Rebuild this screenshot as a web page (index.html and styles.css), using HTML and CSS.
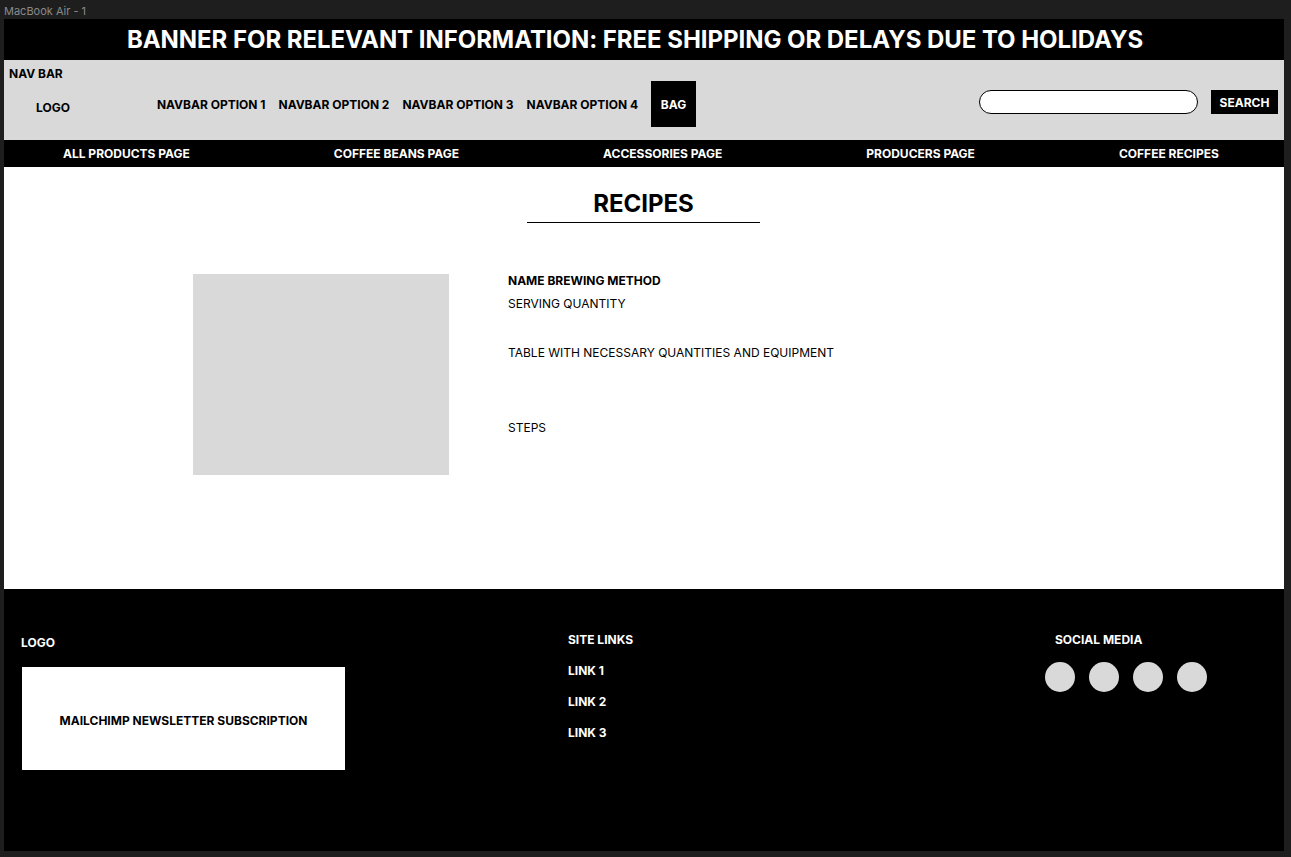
FILE: index.html
```html
<!DOCTYPE html>
<html>
<head>
<meta charset="utf-8">
<link rel="stylesheet" href="styles.css">
</head>
<body>
<div class="canvas">
  <div class="frame-label">MacBook Air - 1</div>
  <div class="frame">
    <div class="banner">BANNER FOR RELEVANT INFORMATION: FREE SHIPPING OR DELAYS DUE TO HOLIDAYS</div>
    <div class="nav">
      <div class="nav-label">NAV BAR</div>
      <div class="nav-row">
        <div class="logo">LOGO</div>
        <div class="options">
          <span>NAVBAR OPTION 1</span>
          <span>NAVBAR OPTION 2</span>
          <span>NAVBAR OPTION 3</span>
          <span>NAVBAR OPTION 4</span>
        </div>
        <div class="bag">BAG</div>
        <div class="search">
          <div class="search-input"></div>
          <div class="search-btn">SEARCH</div>
        </div>
      </div>
    </div>
    <div class="cats">
      <span>ALL PRODUCTS PAGE</span>
      <span>COFFEE BEANS PAGE</span>
      <span>ACCESSORIES PAGE</span>
      <span>PRODUCERS PAGE</span>
      <span>COFFEE RECIPES</span>
    </div>
    <main class="main">
      <h1 class="title">RECIPES</h1>
      <div class="recipe">
        <div class="photo"></div>
        <div class="info">
          <div class="name">NAME BREWING METHOD</div>
          <div class="serving">SERVING QUANTITY</div>
          <div class="table">TABLE WITH NECESSARY QUANTITIES AND EQUIPMENT</div>
          <div class="steps">STEPS</div>
        </div>
      </div>
    </main>
    <footer class="footer">
      <div class="fcol fcol-1">
        <div class="flogo">LOGO</div>
        <div class="newsletter">MAILCHIMP NEWSLETTER SUBSCRIPTION</div>
      </div>
      <div class="fcol fcol-2">
        <div class="fhead">SITE LINKS</div>
        <div class="flink">LINK 1</div>
        <div class="flink">LINK 2</div>
        <div class="flink">LINK 3</div>
      </div>
      <div class="fcol fcol-3">
        <div class="fhead social-head">SOCIAL MEDIA</div>
        <div class="circles">
          <span class="circle"></span>
          <span class="circle"></span>
          <span class="circle"></span>
          <span class="circle"></span>
        </div>
      </div>
    </footer>
  </div>
</div>
</body>
</html>
```
FILE: styles.css
```css
* { box-sizing: border-box; margin: 0; padding: 0; }
html, body { background: #1e1e1e; }
body { font-family: Inter, "Noto Sans", sans-serif; width: 1291px; height: 857px; overflow: hidden; }

.canvas { padding-left: 4px; }
.frame-label { height: 19px; line-height: 23px; font-size: 11px; color: #8a8a8a; }
.frame { width: 1280px; height: 832px; background: #fff; display: flex; flex-direction: column; }

.banner { height: 41px; background: #000; color: #fff; font-weight: 700; font-size: 24px; line-height: 41px; text-align: center; padding-right: 18px; letter-spacing: -0.05px; }

.nav { height: 80px; background: #d9d9d9; padding-top: 6px; }
.nav-label { font-size: 12px; font-weight: 700; line-height: 15px; padding-left: 5px; }
.nav-row { display: flex; align-items: center; height: 46px; padding-right: 6px; }
.logo { font-size: 12px; font-weight: 700; margin-left: 32px; margin-top: 6px; }
.options { display: flex; gap: 13px; margin-left: 87px; font-size: 12px; font-weight: 700; }
.bag { width: 45px; height: 46px; background: #000; color: #fff; font-size: 12px; font-weight: 700; display: flex; align-items: center; justify-content: center; margin-left: 13px; }
.search { margin-left: auto; display: flex; align-items: center; gap: 13px; margin-top: -4px; }
.search-input { width: 219px; height: 24px; background: #fff; border: 1px solid #000; border-radius: 12px; }
.search-btn { width: 67px; height: 24px; background: #000; color: #fff; font-size: 12px; font-weight: 700; display: flex; align-items: center; justify-content: center; }

.cats { height: 27px; background: #000; color: #fff; font-size: 12px; font-weight: 700; display: flex; align-items: center; gap: 144px; padding-left: 59px; }

.main { height: 422px; display: flex; flex-direction: column; align-items: center; padding-top: 22px; padding-right: 1px; }
.title { width: 233px; text-align: center; font-size: 24px; font-weight: 700; line-height: 29px; padding-bottom: 4px; border-bottom: 1px solid #000; }
.recipe { align-self: stretch; display: flex; padding-left: 189px; margin-top: 51px; gap: 59px; }
.photo { width: 256px; height: 201px; background: #d9d9d9; }
.info { font-size: 12px; line-height: 15px; margin-top: -1px; }
.name { font-weight: 700; }
.serving { margin-top: 8px; }
.table { margin-top: 34px; }
.steps { margin-top: 60px; }

.footer { flex: 1; background: #000; color: #fff; display: grid; grid-template-columns: 547px 477px 1fr; padding-left: 17px; padding-top: 43px; font-size: 12px; font-weight: 700; }
.flogo { line-height: 15px; margin-top: 3px; }
.newsletter { width: 323px; height: 103px; background: #fff; color: #000; margin-top: 17px; margin-left: 1px; padding-top: 3px; display: flex; align-items: center; justify-content: center; }
.fhead { line-height: 15px; }
.flink { line-height: 15px; margin-top: 16px; }
.social-head { padding-left: 10px; }
.circles { display: flex; gap: 14px; margin-top: 15px; }
.circle { width: 30px; height: 30px; border-radius: 50%; background: #d9d9d9; }
```
